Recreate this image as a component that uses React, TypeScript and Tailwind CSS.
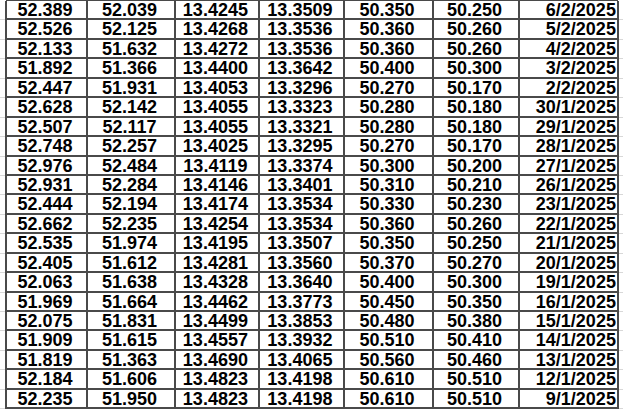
const rows: string[][] = [
  ['52.389', '52.039', '13.4245', '13.3509', '50.350', '50.250', '6/2/2025'],
  ['52.526', '52.125', '13.4268', '13.3536', '50.360', '50.260', '5/2/2025'],
  ['52.133', '51.632', '13.4272', '13.3536', '50.360', '50.260', '4/2/2025'],
  ['51.892', '51.366', '13.4400', '13.3642', '50.400', '50.300', '3/2/2025'],
  ['52.447', '51.931', '13.4053', '13.3296', '50.270', '50.170', '2/2/2025'],
  ['52.628', '52.142', '13.4055', '13.3323', '50.280', '50.180', '30/1/2025'],
  ['52.507', '52.117', '13.4055', '13.3321', '50.280', '50.180', '29/1/2025'],
  ['52.748', '52.257', '13.4025', '13.3295', '50.270', '50.170', '28/1/2025'],
  ['52.976', '52.484', '13.4119', '13.3374', '50.300', '50.200', '27/1/2025'],
  ['52.931', '52.284', '13.4146', '13.3401', '50.310', '50.210', '26/1/2025'],
  ['52.444', '52.194', '13.4174', '13.3534', '50.330', '50.230', '23/1/2025'],
  ['52.662', '52.235', '13.4254', '13.3534', '50.360', '50.260', '22/1/2025'],
  ['52.535', '51.974', '13.4195', '13.3507', '50.350', '50.250', '21/1/2025'],
  ['52.405', '51.612', '13.4281', '13.3560', '50.370', '50.270', '20/1/2025'],
  ['52.063', '51.638', '13.4328', '13.3640', '50.400', '50.300', '19/1/2025'],
  ['51.969', '51.664', '13.4462', '13.3773', '50.450', '50.350', '16/1/2025'],
  ['52.075', '51.831', '13.4499', '13.3853', '50.480', '50.380', '15/1/2025'],
  ['51.909', '51.615', '13.4557', '13.3932', '50.510', '50.410', '14/1/2025'],
  ['51.819', '51.363', '13.4690', '13.4065', '50.560', '50.460', '13/1/2025'],
  ['52.184', '51.606', '13.4823', '13.4198', '50.610', '50.510', '12/1/2025'],
  ['52.235', '51.950', '13.4823', '13.4198', '50.610', '50.510', '9/1/2025'],
];

export default function App() {
  return (
    <div
      className="w-[623px] h-[410px] overflow-hidden bg-white"
      style={{ fontFamily: '"Liberation Sans", Arial, sans-serif' }}
    >
      {/* sheet: faint gridlines at the edges, dark bordered table between */}
      <div className="flex flex-col">
        <div className="ml-[6px] mr-[5px] h-[1px] bg-[#4a4a4a]" />
        {rows.map((row, i) => (
          <div key={i} className="flex h-[19.45px]">
            <div className="w-[6px] border-b border-[#d8d8d8]" />
            <div className="flex-1 grid grid-cols-[81px_88px_84px_85px_89px_86px_99px] border-l-2 border-b-2 border-[#4a4a4a]">
              {row.map((cell, j) => (
                <div
                  key={j}
                  className={
                    'flex items-center text-[18px] leading-none font-bold text-black border-r-2 border-[#4a4a4a] ' +
                    (j === 6 ? 'justify-end pr-[1px]' : 'justify-center pr-[3px]')
                  }
                >
                  {cell}
                </div>
              ))}
            </div>
            <div className="w-[5px] border-b border-[#d8d8d8]" />
          </div>
        ))}
      </div>
    </div>
  );
}
